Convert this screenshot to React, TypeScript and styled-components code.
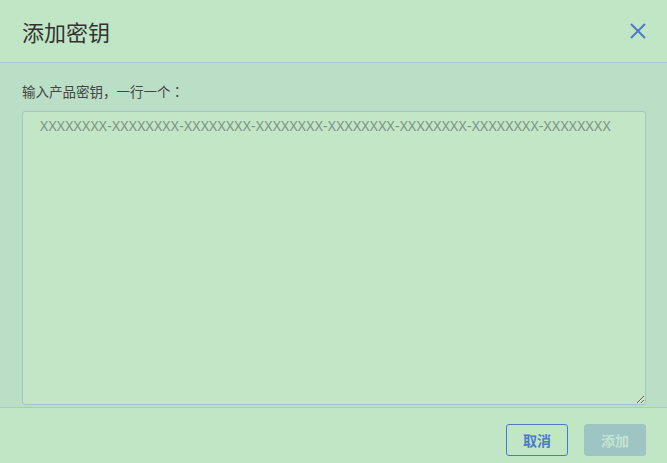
import React from "react";
import styled, { createGlobalStyle } from "styled-components";

const GlobalStyle = createGlobalStyle`
  html, body {
    margin: 0;
    padding: 0;
    background: #c1e6c6;
  }
  body {
    font-family: "Noto Sans", "Noto Sans CJK SC", sans-serif;
  }
`;

const Dialog = styled.div`
  width: 667px;
  height: 463px;
  display: flex;
  flex-direction: column;
  background: #c1e6c6;
  box-sizing: border-box;
`;

const Header = styled.div`
  height: 62px;
  flex: none;
  display: flex;
  align-items: center;
  justify-content: space-between;
  padding: 0 19px 0 22px;
  border-bottom: 1px solid #a9c9d0;
`;

const Title = styled.h4`
  margin: 0;
  font-family: "Noto Sans CJK SC", sans-serif;
  font-size: 22px;
  font-weight: 400;
  color: #333;
  line-height: 1;
`;

const CloseButton = styled.button`
  border: none;
  background: transparent;
  padding: 0;
  width: 20px;
  height: 20px;
  display: flex;
  align-items: center;
  justify-content: center;
  cursor: pointer;
`;

const Body = styled.div`
  flex: 1;
  display: flex;
  flex-direction: column;
  background: #bbdfc6;
  padding: 18px 21px 2px 22px;
`;

const Label = styled.label`
  font-family: "Noto Sans CJK SC", sans-serif;
  font-size: 13.5px;
  color: #444;
  line-height: 20px;
  margin-bottom: 10px;
`;

const CenteredPunct = styled.span`
  font-family: "Noto Sans CJK TC", sans-serif;
`;

const KeyInput = styled.textarea`
  flex: 1;
  resize: vertical;
  box-sizing: border-box;
  background: #c2e6c6;
  border: 1px solid #a3c4cb;
  border-radius: 3px;
  padding: 4px 17px;
  font-family: "Noto Sans", sans-serif;
  font-size: 14px;
  letter-spacing: 0.2px;
  color: #333;
  outline: none;
  &::placeholder {
    color: #7e9485;
  }
`;

const Footer = styled.div`
  height: 56px;
  flex: none;
  display: flex;
  align-items: flex-start;
  justify-content: flex-end;
  gap: 16px;
  padding: 16px 21px 0 22px;
  box-sizing: border-box;
  border-top: 1px solid #a9c9d0;
`;

const Button = styled.button<{ $primary?: boolean }>`
  height: 32px;
  padding: 0 16px;
  border-radius: 3px;
  font-family: "Noto Sans CJK SC", sans-serif;
  font-size: 14px;
  font-weight: 700;
  cursor: pointer;
  border: 1px solid ${(p) => (p.$primary ? "#9ec5c3" : "#4b7bc4")};
  background: ${(p) => (p.$primary ? "#9ec5c3" : "transparent")};
  color: ${(p) => (p.$primary ? "#c3e3cf" : "#4b7bc4")};
`;

const placeholder = Array(8).fill("XXXXXXXX").join("-");

export default function App() {
  return (
    <>
      <GlobalStyle />
      <Dialog>
        <Header>
          <Title>添加密钥</Title>
          <CloseButton aria-label="关闭">
            <svg width="18" height="18" viewBox="0 0 18 18">
              <path
                d="M2 2 L16 16 M16 2 L2 16"
                stroke="#4b7bc4"
                strokeWidth="2"
                fill="none"
              />
            </svg>
          </CloseButton>
        </Header>
        <Body>
          <Label>
            输入产品密钥，一行一个<CenteredPunct>：</CenteredPunct>
          </Label>
          <KeyInput placeholder={placeholder} />
        </Body>
        <Footer>
          <Button>取消</Button>
          <Button $primary disabled>
            添加
          </Button>
        </Footer>
      </Dialog>
    </>
  );
}
